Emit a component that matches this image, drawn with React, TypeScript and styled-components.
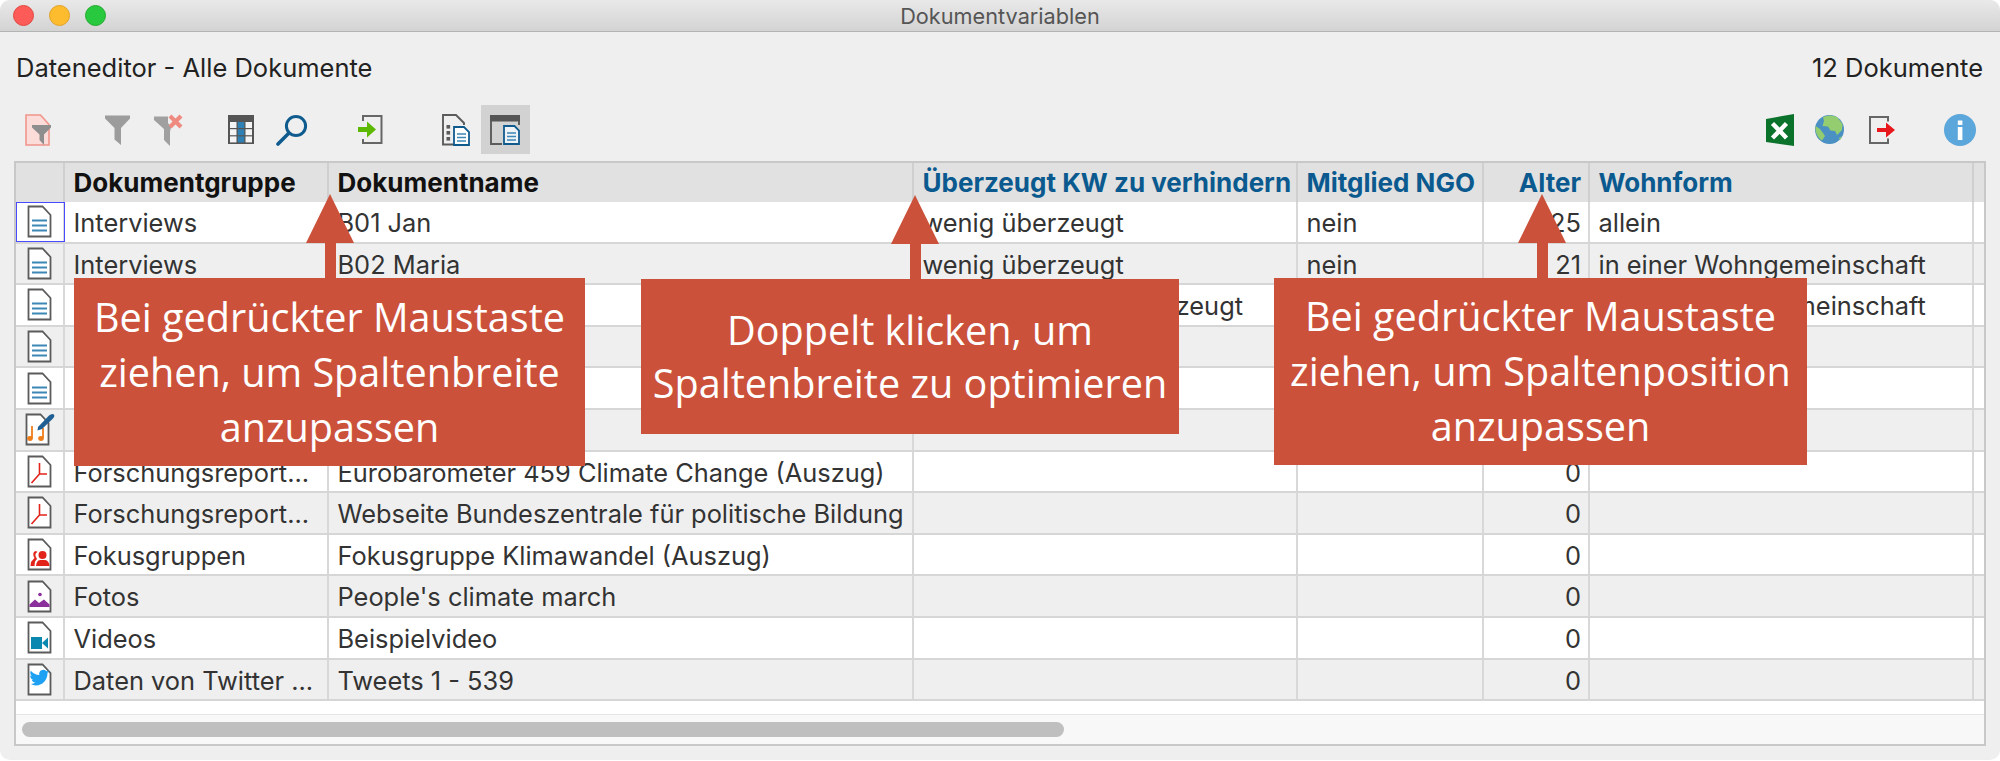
import React from 'react';
import styled, { createGlobalStyle } from 'styled-components';

const GlobalStyle = createGlobalStyle`
  html, body {
    margin: 0;
    padding: 0;
    background: #fff;
  }
  body {
    font-family: Inter, "Liberation Sans", sans-serif;
  }
`;

const Stage = styled.div`
  position: relative;
  width: 2000px;
  height: 761px;
  overflow: hidden;
`;

const Window = styled.div`
  display: flex;
  flex-direction: column;
  height: 760px;
  background: #efefef;
  border-radius: 10px;
  overflow: hidden;
`;

const TitleBar = styled.div`
  position: relative;
  display: flex;
  align-items: center;
  justify-content: center;
  flex: 0 0 32px;
  box-sizing: border-box;
  background: linear-gradient(#e9e9e9, #d3d3d3);
  border-bottom: 1px solid #b4b4b4;
  font-size: 21.7px;
  color: #555;
`;

const Lights = styled.div`
  position: absolute;
  left: 13px;
  top: 5px;
  display: flex;
  gap: 15px;
`;

const Light = styled.span<{ $color: string; $edge: string }>`
  width: 21px;
  height: 21px;
  border-radius: 50%;
  box-sizing: border-box;
  background: ${p => p.$color};
  border: 1px solid ${p => p.$edge};
`;

const InfoRow = styled.div`
  display: flex;
  justify-content: space-between;
  flex: 0 0 73px;
  box-sizing: border-box;
  padding: 21px 17px 0 16px;
  font-size: 25.5px;
  line-height: 29px;
  color: #222;
`;

const Toolbar = styled.div`
  display: flex;
  justify-content: space-between;
  flex: 0 0 49px;
  padding: 0 15.5px 0 13.5px;
`;

const ToolGroup = styled.div`
  display: flex;
`;

const ToolButton = styled.div<{ $gap?: number; $active?: boolean }>`
  display: flex;
  align-items: center;
  justify-content: center;
  width: 49px;
  height: 49px;
  margin-left: ${p => p.$gap ?? 0}px;
  background: ${p => (p.$active ? '#d2d2d2' : 'transparent')};
`;

const Table = styled.div`
  display: flex;
  flex-direction: column;
  margin: 7px 14px 0;
  height: 585px;
  box-sizing: border-box;
  border: 2px solid #c8c8c8;
  background: #fff;
`;

const columns = '49px 264px 585px 384px 186px 106px 384px 1fr';

const HeaderRow = styled.div`
  display: grid;
  grid-template-columns: ${columns};
  height: 39px;
  background: #e1e1e1;
`;

const HeaderCell = styled.div<{ $blue?: boolean; $right?: boolean }>`
  display: flex;
  align-items: center;
  justify-content: ${p => (p.$right ? 'flex-end' : 'flex-start')};
  padding: 0 7px 0 8.5px;
  border-right: 2px solid #cfcfcf;
  font-size: 26px;
  font-weight: 700;
  white-space: nowrap;
  overflow: hidden;
  color: ${p => (p.$blue ? '#0b5a8f' : '#111')};
  &:last-child {
    border-right: 0;
  }
`;

const Row = styled.div<{ $odd: boolean }>`
  display: grid;
  grid-template-columns: ${columns};
  height: 41.6px;
  box-sizing: border-box;
  border-bottom: 2px solid #d6d6d6;
  background: ${p => (p.$odd ? '#efefef' : '#fff')};
`;

const Cell = styled.div<{ $right?: boolean }>`
  padding: 0 7px 0 8.5px;
  border-right: 2px solid #d8d8d8;
  font-size: 25.4px;
  line-height: 41px;
  color: #333;
  white-space: nowrap;
  overflow: hidden;
  text-overflow: clip;
  text-align: ${p => (p.$right ? 'right' : 'left')};
  &:last-child {
    border-right: 0;
  }
`;

const IconCell = styled.div<{ $selected?: boolean }>`
  display: flex;
  align-items: center;
  justify-content: center;
  box-sizing: border-box;
  border-right: 2px solid #d8d8d8;
  outline: ${p => (p.$selected ? '1.5px solid #4a4aff' : 'none')};
  outline-offset: -1.5px;
`;

const Filler = styled.div`
  flex: 1;
  background: #fff;
`;

const ScrollTrack = styled.div`
  flex: 0 0 29px;
  box-sizing: border-box;
  padding: 7px 6px;
  background: #f8f8f8;
  border-top: 1px solid #e6e6e6;
`;

const ScrollThumb = styled.div`
  width: 1042px;
  height: 15px;
  border-radius: 8px;
  background: #bfbfbf;
`;

const Callout = styled.div<{ $x: number; $y: number; $w: number; $h: number; $tip: number; $leading: number }>`
  position: absolute;
  left: ${p => p.$x}px;
  top: ${p => p.$y}px;
  width: ${p => p.$w}px;
  height: ${p => p.$h}px;
  display: flex;
  align-items: center;
  justify-content: center;
  text-align: center;
  background: #cb513b;
  color: #fff;
  font-family: "Open Sans", sans-serif;
  font-size: 39.6px;
  line-height: ${p => p.$leading}px;

  > svg {
    position: absolute;
    left: ${p => p.$tip - p.$x - 25}px;
    top: -84px;
  }
`;

function Arrow() {
  return (
    <svg width="50" height="85" viewBox="0 0 50 85">
      <path d="M25 0 L49 49 H31 V85 H20 V49 H1 Z" fill="#cb513b" />
    </svg>
  );
}

function DocShape({ children }: { children?: React.ReactNode }) {
  return (
    <svg width="25" height="33" viewBox="0 0 25 33">
      <path d="M1.5 1.5 H15.5 L23.5 10 V31.5 H1.5 Z" fill="#fff" stroke="#5b5b5b" strokeWidth="1.8" />
      {children}
    </svg>
  );
}

function LinesDoc() {
  return (
    <DocShape>
      <path d="M5 15.5 H20 M5 20.5 H20 M5 25.5 H20" stroke="#3d87b6" strokeWidth="1.8" />
    </DocShape>
  );
}

function MusicDoc() {
  return (
    <svg width="30" height="33" viewBox="0 0 30 33">
      <path d="M1.5 1.5 H15.5 L23.5 10 V31.5 H1.5 Z" fill="#fff" stroke="#5b5b5b" strokeWidth="1.8" />
      <path d="M7 13 V25 M18 15 V25" stroke="#ef7d1a" strokeWidth="1.8" />
      <ellipse cx="5" cy="25.5" rx="2.8" ry="2.4" fill="#ef7d1a" />
      <ellipse cx="16" cy="25.5" rx="2.8" ry="2.4" fill="#ef7d1a" />
      <path d="M13 14 L24 2.5 Q27 0 29 1.5 Q30 3.5 27.5 6 L17 16 L12.5 17.5 Z" fill="#1f5f93" />
    </svg>
  );
}

function PdfDoc() {
  return (
    <DocShape>
      <path d="M12.5 8 V19 M12.5 19 L20 19 M12.5 19 L4.5 28" stroke="#e2231a" strokeWidth="1.6" fill="none" />
    </DocShape>
  );
}

function GroupDoc() {
  return (
    <DocShape>
      <circle cx="15.5" cy="17" r="4" fill="#e2231a" />
      <path d="M9 28 Q9.5 22.5 13 22 H18 Q22 22.5 22.5 28 Z" fill="#e2231a" />
      <path d="M9 13 Q5.5 13.5 6.5 18 L7.5 20 L4 24 L3.5 28 H7.5 L8 23.5 L10 21 L8.5 18 Q8 15 10.5 14 Z" fill="#e2231a" />
    </DocShape>
  );
}

function PhotoDoc() {
  return (
    <DocShape>
      <circle cx="13" cy="14.5" r="1.8" fill="#8a2f9b" />
      <path d="M2.5 27 V24.5 L8 19.5 L12 23 L17 19.5 L22.5 24.5 V27 Z" fill="#8a2f9b" />
    </DocShape>
  );
}

function VideoDoc() {
  return (
    <DocShape>
      <rect x="4" y="16" width="11" height="12" fill="#0b88b0" />
      <path d="M15 22 L21 16.5 V27.5 Z" fill="#0b88b0" />
    </DocShape>
  );
}

function TwitterDoc() {
  return (
    <DocShape>
      <svg x="2.5" y="5" width="20" height="20" viewBox="0 0 24 24">
        <path
          fill="#1ea1f2"
          d="M23.953 4.57a10 10 0 01-2.825.775 4.958 4.958 0 002.163-2.723c-.951.555-2.005.959-3.127 1.184a4.92 4.92 0 00-8.384 4.482C7.69 8.095 4.067 6.13 1.64 3.162a4.822 4.822 0 00-.666 2.475c0 1.71.87 3.213 2.188 4.096a4.904 4.904 0 01-2.228-.616v.06a4.923 4.923 0 003.946 4.827 4.996 4.996 0 01-2.212.085 4.936 4.936 0 004.604 3.417 9.867 9.867 0 01-6.102 1.51A13.995 13.995 0 007.557 21c9.054 0 13.999-7.496 13.999-13.986 0-.209 0-.42-.015-.63A9.936 9.936 0 0024 4.59z"
        />
      </svg>
    </DocShape>
  );
}

function FilterDocIcon() {
  return (
    <svg width="26" height="32" viewBox="0 0 26 32">
      <path d="M1 1 H15.5 L24 10.5 V31 H1 Z" fill="#fbdcd8" stroke="#f0958b" strokeWidth="1.6" />
      <path d="M7 11 H26 V13.5 L19 20.5 V31 L14.5 26 V20.5 L7 13.5 Z" fill="#8e8e8e" />
    </svg>
  );
}

function FunnelIcon() {
  return (
    <svg width="25" height="30" viewBox="0 0 25 30">
      <path d="M0 0.5 H25 V3.5 L16 13 V30 L9.5 24.5 V13 L0 3.5 Z" fill="#9c9c9c" />
    </svg>
  );
}

function FunnelOffIcon() {
  return (
    <svg width="30" height="32" viewBox="0 0 30 32">
      <path d="M0 2.5 H14 L14 9 L17 13 L16 18 V32 L10 26 V15 L0 6 Z" fill="#a0a0a0" />
      <path d="M16 2 L27 13 M27 2 L16 13" stroke="#ee8a80" strokeWidth="4.2" />
    </svg>
  );
}

function ColumnsIcon() {
  return (
    <svg width="26" height="29" viewBox="0 0 26 29">
      <rect width="26" height="29" fill="#555" />
      <rect x="2" y="7" width="6.5" height="6" fill="#f4f4f4" />
      <rect x="9.8" y="7" width="6.5" height="6" fill="#2f80b5" />
      <rect x="17.5" y="7" width="6.5" height="6" fill="#f4f4f4" />
      <rect x="2" y="14.2" width="6.5" height="6" fill="#f4f4f4" />
      <rect x="9.8" y="14.2" width="6.5" height="6" fill="#2f80b5" />
      <rect x="17.5" y="14.2" width="6.5" height="6" fill="#f4f4f4" />
      <rect x="2" y="21.4" width="6.5" height="6" fill="#f4f4f4" />
      <rect x="9.8" y="21.4" width="6.5" height="6" fill="#2f80b5" />
      <rect x="17.5" y="21.4" width="6.5" height="6" fill="#f4f4f4" />
    </svg>
  );
}

function SearchIcon() {
  return (
    <svg width="32" height="32" viewBox="0 0 32 32">
      <circle cx="20" cy="12" r="9.6" fill="none" stroke="#0f5b8e" strokeWidth="3" />
      <path d="M13 19 L2 30" stroke="#0f5b8e" strokeWidth="3.6" strokeLinecap="round" />
    </svg>
  );
}

function ImportIcon() {
  return (
    <svg width="25" height="29" viewBox="0 0 25 29">
      <path d="M5 6 V1 H23.5 V28 H5 V24" fill="none" stroke="#666" strokeWidth="2" />
      <path d="M0 12 H9 V6.5 L18 14.5 L9 22.5 V17 H0 Z" fill="#5cb800" />
    </svg>
  );
}

function DocListIcon() {
  return (
    <svg width="28" height="32" viewBox="0 0 28 32">
      <path d="M13 30.5 H1 V1 H14 L22 9 V11" fill="none" stroke="#5b5b5b" strokeWidth="1.9" />
      <rect x="4.5" y="11" width="3.6" height="3.6" fill="#5b5b5b" />
      <rect x="4.5" y="17" width="3.6" height="3.6" fill="#5b5b5b" />
      <rect x="4.5" y="23" width="3.6" height="3.6" fill="#5b5b5b" />
      <path d="M12 13 H22 L27 18 V31 H12 Z" fill="#fff" stroke="#0f5b8e" strokeWidth="1.8" />
      <path d="M15 20 H24 M15 23.5 H24 M15 27 H24" stroke="#3d87b6" strokeWidth="1.5" />
    </svg>
  );
}

function PanelDocIcon() {
  return (
    <svg width="30" height="30" viewBox="0 0 30 30">
      <rect width="30" height="6.5" fill="#555" />
      <path d="M1 6 V29 H12 M29 6 V10" fill="none" stroke="#5b5b5b" strokeWidth="1.9" />
      <path d="M14 11 H24.5 L29 15.5 V29 H14 Z" fill="#eef3f7" stroke="#0f5b8e" strokeWidth="1.8" />
      <path d="M17 18 H26 M17 21.5 H26 M17 25 H26" stroke="#3d87b6" strokeWidth="1.5" />
    </svg>
  );
}

function ExcelIcon() {
  return (
    <svg width="28" height="32" viewBox="0 0 28 32">
      <path d="M0 5 L28 0 V32 L0 28 Z" fill="#0b722c" />
      <path d="M6.5 9.5 L20.5 24 M20.5 9.5 L6.5 24" stroke="#fff" strokeWidth="4.4" />
    </svg>
  );
}

function GlobeIcon() {
  return (
    <svg width="29" height="29" viewBox="0 0 29 29">
      <circle cx="14.5" cy="14.5" r="14.5" fill="#4a90c2" />
      <path d="M8 2 Q15 -1 22 2 L27.5 9 L27 15 L22 20 L20 16 L15.5 15.5 L13 11.5 L7.5 11 L9 6 Z" fill="#93cd6f" />
      <path d="M0.5 11 L5 14 L8 18 L10 21 L7 25.5 Q1.5 22 0.5 15 Z" fill="#93cd6f" />
      <path d="M24 23 L27 21 L25 25 Z" fill="#93cd6f" />
    </svg>
  );
}

function ExportIcon() {
  return (
    <svg width="26" height="28" viewBox="0 0 26 28">
      <path d="M19 5.5 V1 H1 V27 H19 V22.5" fill="none" stroke="#666" strokeWidth="2" />
      <path d="M8 12 H17 V6.5 L26 14 L17 21.5 V16 H8 Z" fill="#e8171b" />
    </svg>
  );
}

function InfoIcon() {
  return (
    <svg width="32" height="32" viewBox="0 0 32 32">
      <circle cx="16" cy="16" r="16" fill="#5ba6da" />
      <rect x="13.8" y="6.5" width="4.6" height="4.4" fill="#fff" />
      <rect x="13.8" y="13" width="4.6" height="13" fill="#fff" />
    </svg>
  );
}

type Doc = {
  icon: React.ReactNode;
  group?: string;
  name?: string;
  conviction?: string;
  ngo?: string;
  age?: string;
  housing?: string;
};

const docs: Doc[] = [
  { icon: <LinesDoc />, group: 'Interviews', name: 'B01 Jan', conviction: 'wenig überzeugt', ngo: 'nein', age: '25', housing: 'allein' },
  { icon: <LinesDoc />, group: 'Interviews', name: 'B02 Maria', conviction: 'wenig überzeugt', ngo: 'nein', age: '21', housing: 'in einer Wohngemeinschaft' },
  { icon: <LinesDoc />, conviction: 'durchschnittlich überzeugt', housing: 'in einer Wohngemeinschaft' },
  { icon: <LinesDoc /> },
  { icon: <LinesDoc /> },
  { icon: <MusicDoc /> },
  { icon: <PdfDoc />, group: 'Forschungsreport...', name: 'Eurobarometer 459 Climate Change (Auszug)', age: '0' },
  { icon: <PdfDoc />, group: 'Forschungsreport...', name: 'Webseite Bundeszentrale für politische Bildung', age: '0' },
  { icon: <GroupDoc />, group: 'Fokusgruppen', name: 'Fokusgruppe Klimawandel (Auszug)', age: '0' },
  { icon: <PhotoDoc />, group: 'Fotos', name: "People's climate march", age: '0' },
  { icon: <VideoDoc />, group: 'Videos', name: 'Beispielvideo', age: '0' },
  { icon: <TwitterDoc />, group: 'Daten von Twitter ...', name: 'Tweets 1 - 539', age: '0' },
];

export default function App() {
  return (
    <Stage>
      <GlobalStyle />
      <Window>
        <TitleBar>
          <Lights>
            <Light $color="#fc5b57" $edge="#e2463f" />
            <Light $color="#fdbc2e" $edge="#e0a028" />
            <Light $color="#28c83f" $edge="#22ab2f" />
          </Lights>
          Dokumentvariablen
        </TitleBar>
        <InfoRow>
          <span>Dateneditor - Alle Dokumente</span>
          <span>12 Dokumente</span>
        </InfoRow>
        <Toolbar>
          <ToolGroup>
            <ToolButton><FilterDocIcon /></ToolButton>
            <ToolButton $gap={30}><FunnelIcon /></ToolButton>
            <ToolButton $gap={2.5}><FunnelOffIcon /></ToolButton>
            <ToolButton $gap={23.5}><ColumnsIcon /></ToolButton>
            <ToolButton $gap={1.5}><SearchIcon /></ToolButton>
            <ToolButton $gap={30}><ImportIcon /></ToolButton>
            <ToolButton $gap={36.5}><DocListIcon /></ToolButton>
            <ToolButton $active><PanelDocIcon /></ToolButton>
          </ToolGroup>
          <ToolGroup>
            <ToolButton><ExcelIcon /></ToolButton>
            <ToolButton $gap={0.5}><GlobeIcon /></ToolButton>
            <ToolButton $gap={3.5}><ExportIcon /></ToolButton>
            <ToolButton $gap={29}><InfoIcon /></ToolButton>
          </ToolGroup>
        </Toolbar>
        <Table>
          <HeaderRow>
            <HeaderCell />
            <HeaderCell>Dokumentgruppe</HeaderCell>
            <HeaderCell>Dokumentname</HeaderCell>
            <HeaderCell $blue>Überzeugt KW zu verhindern</HeaderCell>
            <HeaderCell $blue>Mitglied NGO</HeaderCell>
            <HeaderCell $blue $right>Alter</HeaderCell>
            <HeaderCell $blue>Wohnform</HeaderCell>
            <HeaderCell />
          </HeaderRow>
          {docs.map((doc, i) => (
            <Row key={i} $odd={i % 2 === 1}>
              <IconCell $selected={i === 0}>{doc.icon}</IconCell>
              <Cell>{doc.group}</Cell>
              <Cell>{doc.name}</Cell>
              <Cell>{doc.conviction}</Cell>
              <Cell>{doc.ngo}</Cell>
              <Cell $right>{doc.age}</Cell>
              <Cell>{doc.housing}</Cell>
              <Cell />
            </Row>
          ))}
          <Filler />
          <ScrollTrack>
            <ScrollThumb />
          </ScrollTrack>
        </Table>
      </Window>

      <Callout $x={74} $y={278} $w={511} $h={188} $tip={330} $leading={55}>
        <Arrow />
        <div>Bei gedrückter Maustaste<br />ziehen, um Spaltenbreite<br />anzupassen</div>
      </Callout>
      <Callout $x={641} $y={279} $w={538} $h={155} $tip={915} $leading={53}>
        <Arrow />
        <div>Doppelt klicken, um<br />Spaltenbreite zu optimieren</div>
      </Callout>
      <Callout $x={1274} $y={278} $w={533} $h={187} $tip={1542} $leading={55}>
        <Arrow />
        <div>Bei gedrückter Maustaste<br />ziehen, um Spaltenposition<br />anzupassen</div>
      </Callout>
    </Stage>
  );
}
